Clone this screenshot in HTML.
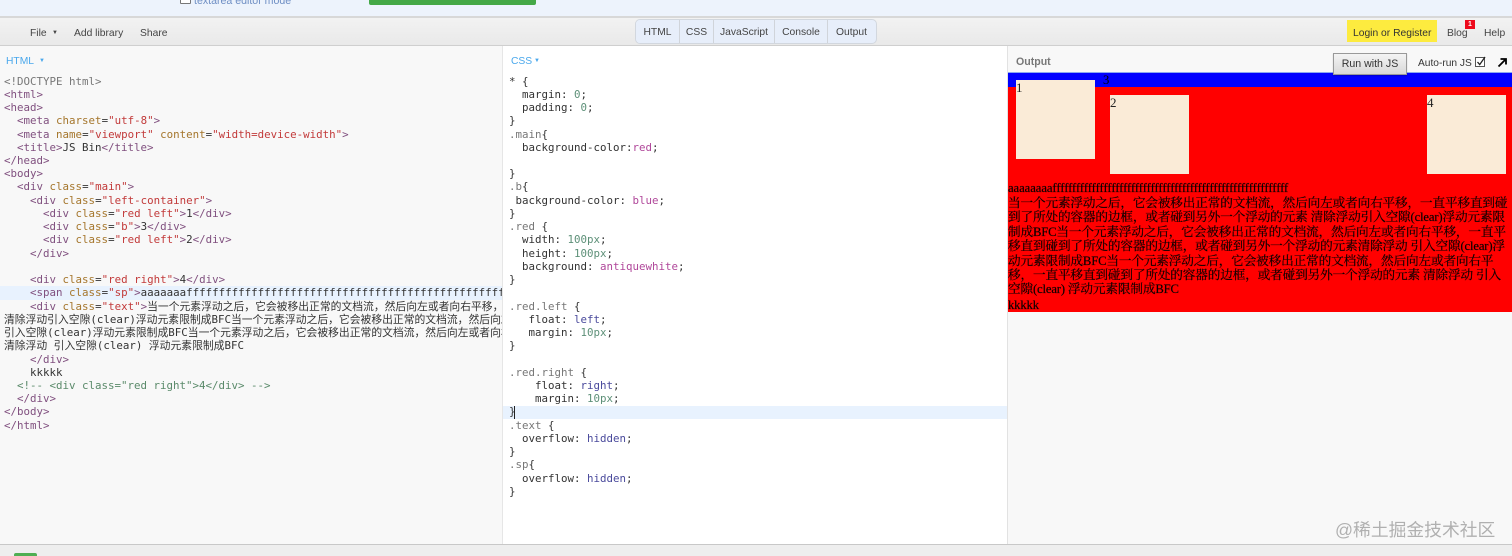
<!DOCTYPE html>
<html lang="zh"><head><meta charset="utf-8"><title>JS Bin</title>
<style>
*{margin:0;padding:0;box-sizing:border-box}
html,body{width:1512px;height:556px;overflow:hidden;background:#f8f8f8}
body{position:relative;font-family:"Liberation Sans","Noto Sans CJK SC",sans-serif;color:#333}
.a{position:absolute;white-space:nowrap}
.ui{font-size:10.3px;line-height:14px;color:#444}
pre{position:absolute;font-family:"DejaVu Sans Mono","Noto Sans CJK SC",monospace;font-size:10.8px;line-height:13.23px;color:#333;white-space:pre;overflow:hidden}
.t{color:#80507f}.n{color:#a5762c}.s{color:#c23a3a}.d{color:#777}.c{color:#5a8a6a}
.g{color:#777}.m{color:#5d9078}.k{color:#b0479a}.v{color:#4a4a9c}
.tab{position:absolute;top:20px;height:23px;background:#e7eefa;border-right:1px solid #d0d4da;font-size:10.3px;line-height:26px;text-align:center;color:#444}
.o{position:absolute;white-space:nowrap;font-family:"Liberation Serif","Noto Serif CJK SC",serif;font-size:12.64px;line-height:14.4px;color:#000;left:1008px;letter-spacing:-.14px;-webkit-text-stroke:.25px #300}
.box{position:absolute;width:79px;height:79px;background:#faebd7;font-family:"Liberation Serif",serif;font-size:13px;line-height:16px;color:#222}
</style></head>
<body>
<div class="a" style="left:0;top:0;width:1512px;height:16px;background:#edf3fc"></div>
<div class="a" style="left:180px;top:-8px;width:11px;height:12px;border:1px solid #777;background:#fff;border-radius:1px"></div>
<div class="a" style="left:194px;top:-5px;font-size:10.6px;line-height:13px;color:#6f8fc4">textarea editor mode</div>
<div class="a" style="left:369px;top:0;width:167px;height:5px;background:#44a847;border-radius:0 0 2px 2px"></div>
<div class="a" style="left:0;top:16px;width:1512px;height:2px;background:#d8d8d8"></div>
<div class="a" style="left:0;top:18px;width:1512px;height:27px;background:linear-gradient(#f2f2f2,#e9e9e9)"></div>
<div class="a" style="left:0;top:45px;width:1512px;height:1px;background:#cfcfcf"></div>

<div class="a ui" style="left:30px;top:26px;padding-top:1px">File</div>
<div class="a" style="left:52px;top:29px;font-size:6px;line-height:9px;color:#444">▼</div>
<div class="a ui" style="left:74px;top:27px">Add library</div>
<div class="a ui" style="left:140px;top:27px">Share</div>

<div class="a" style="left:635px;top:19px;width:242px;height:25px;border:1px solid #d2d7de;border-radius:5px;background:#e7eefa"></div>
<div class="tab" style="left:636px;width:44px;border-radius:4px 0 0 4px">HTML</div>
<div class="tab" style="left:680px;width:34px">CSS</div>
<div class="tab" style="left:714px;width:61px">JavaScript</div>
<div class="tab" style="left:775px;width:53px">Console</div>
<div class="tab" style="left:828px;width:47px;border-right:0;border-radius:0 4px 4px 0">Output</div>

<div class="a" style="left:1347px;top:20px;width:90px;height:22px;background:#fdeb3f"></div>
<div class="a ui" style="left:1353px;top:27px;color:#333">Login or Register</div>
<div class="a ui" style="left:1447px;top:27px">Blog</div>
<div class="a" style="left:1465px;top:20px;width:10px;height:9px;background:#ee0a1c;color:#fff;font-size:7px;line-height:9px;text-align:center;font-weight:bold">1</div>
<div class="a ui" style="left:1484px;top:27px">Help</div>

<!-- panels -->
<div class="a" style="left:0;top:46px;width:502px;height:498px;background:#f8f8f8"></div>
<div class="a" style="left:502px;top:46px;width:506px;height:498px;background:#fff;border-left:1px solid #e6e6e6;border-right:1px solid #e2e2e2"></div>
<div class="a" style="left:1008px;top:46px;width:504px;height:26px;background:#f8f8f8"></div>

<div class="a" style="left:6px;top:55px;font-size:10.3px;line-height:14px;color:#4aa8ec">HTML</div>
<div class="a" style="left:39px;top:57px;font-size:6px;line-height:9px;color:#4aa8ec">▼</div>
<div class="a" style="left:511px;top:55px;font-size:10.3px;line-height:14px;color:#4aa8ec">CSS</div>
<div class="a" style="left:534px;top:57px;font-size:6px;line-height:9px;color:#4aa8ec">▼</div>
<div class="a" style="left:1016px;top:55px;font-size:10.6px;line-height:14px;color:#777;font-weight:bold">Output</div>

<!-- HTML editor -->
<div class="a" style="left:0;top:286px;width:502px;height:14px;background:#e8f2fe"></div>
<pre style="left:4px;top:74.6px;width:498px;height:370px"><span class="d">&lt;!DOCTYPE html&gt;</span>
<span class="t">&lt;html&gt;</span>
<span class="t">&lt;head&gt;</span>
  <span class="t">&lt;meta</span> <span class="n">charset</span>=<span class="s">"utf-8"</span><span class="t">&gt;</span>
  <span class="t">&lt;meta</span> <span class="n">name</span>=<span class="s">"viewport"</span> <span class="n">content</span>=<span class="s">"width=device-width"</span><span class="t">&gt;</span>
  <span class="t">&lt;title&gt;</span>JS Bin<span class="t">&lt;/title&gt;</span>
<span class="t">&lt;/head&gt;</span>
<span class="t">&lt;body&gt;</span>
  <span class="t">&lt;div</span> <span class="n">class</span>=<span class="s">"main"</span><span class="t">&gt;</span>
    <span class="t">&lt;div</span> <span class="n">class</span>=<span class="s">"left-container"</span><span class="t">&gt;</span>
      <span class="t">&lt;div</span> <span class="n">class</span>=<span class="s">"red left"</span><span class="t">&gt;</span>1<span class="t">&lt;/div&gt;</span>
      <span class="t">&lt;div</span> <span class="n">class</span>=<span class="s">"b"</span><span class="t">&gt;</span>3<span class="t">&lt;/div&gt;</span>
      <span class="t">&lt;div</span> <span class="n">class</span>=<span class="s">"red left"</span><span class="t">&gt;</span>2<span class="t">&lt;/div&gt;</span>
    <span class="t">&lt;/div&gt;</span>

    <span class="t">&lt;div</span> <span class="n">class</span>=<span class="s">"red right"</span><span class="t">&gt;</span>4<span class="t">&lt;/div&gt;</span>
    <span class="t">&lt;span</span> <span class="n">class</span>=<span class="s">"sp"</span><span class="t">&gt;</span>aaaaaaafffffffffffffffffffffffffffffffffffffffffffffffffffffffffffff
    <span class="t">&lt;div</span> <span class="n">class</span>=<span class="s">"text"</span><span class="t">&gt;</span>当一个元素浮动之后，它会被移出正常的文档流，然后向左或者向右平移，一直平移
清除浮动引入空隙(clear)浮动元素限制成BFC当一个元素浮动之后，它会被移出正常的文档流，然后向左或者向右平移
引入空隙(clear)浮动元素限制成BFC当一个元素浮动之后，它会被移出正常的文档流，然后向左或者向右平移
清除浮动 引入空隙(clear) 浮动元素限制成BFC
    <span class="t">&lt;/div&gt;</span>
    kkkkk
  <span class="c">&lt;!-- &lt;div class="red right"&gt;4&lt;/div&gt; --&gt;</span>
  <span class="t">&lt;/div&gt;</span>
<span class="t">&lt;/body&gt;</span>
<span class="t">&lt;/html&gt;</span></pre>

<!-- CSS editor -->
<div class="a" style="left:503px;top:405.5px;width:504px;height:13.5px;background:#e8f2fe"></div>
<div class="a" style="left:514px;top:406px;width:1px;height:13px;background:#222"></div>
<pre style="left:509px;top:74.6px;width:495px;height:430px">* {
  margin: <span class="m">0</span>;
  padding: <span class="m">0</span>;
}
<span class="g">.main</span>{
  background-color:<span class="k">red</span>;

}
<span class="g">.b</span>{
 background-color: <span class="k">blue</span>;
}
<span class="g">.red</span> {
  width: <span class="m">100px</span>;
  height: <span class="m">100px</span>;
  background: <span class="k">antiquewhite</span>;
}

<span class="g">.red.left</span> {
   float: <span class="v">left</span>;
   margin: <span class="m">10px</span>;
}

<span class="g">.red.right</span> {
    float: <span class="v">right</span>;
    margin: <span class="m">10px</span>;
}
<span class="g">.text</span> {
  overflow: <span class="v">hidden</span>;
}
<span class="g">.sp</span>{
  overflow: <span class="v">hidden</span>;
}</pre>

<!-- Output -->
<div class="a" style="left:1008px;top:72px;width:504px;height:1px;background:#8aa8f0"></div>
<div class="a" style="left:1008px;top:73px;width:504px;height:239px;background:#f00"></div>
<div class="a" style="left:1008px;top:73px;width:504px;height:13.5px;background:#00f"></div>
<div class="a" style="left:1103px;top:72.5px;font-family:'Liberation Serif',serif;font-size:12.64px;line-height:14px;color:#000">3</div>
<div class="box" style="left:1016px;top:80px;">1</div>
<div class="box" style="left:1110px;top:94.5px">2</div>
<div class="box" style="left:1427px;top:94.5px">4</div>
<div class="o" style="top:181px;letter-spacing:-.05px">aaaaaaaaffffffffffffffffffffffffffffffffffffffffffffffffffffffffffff</div>
<div class="o" style="top:196px">当一个元素浮动之后，它会被移出正常的文档流，然后向左或者向右平移，一直平移直到碰</div>
<div class="o" style="top:210.4px">到了所处的容器的边框，或者碰到另外一个浮动的元素 清除浮动引入空隙(clear)浮动元素限</div>
<div class="o" style="top:224.8px">制成BFC当一个元素浮动之后，它会被移出正常的文档流，然后向左或者向右平移，一直平</div>
<div class="o" style="top:239.2px">移直到碰到了所处的容器的边框，或者碰到另外一个浮动的元素清除浮动 引入空隙(clear)浮</div>
<div class="o" style="top:253.6px">动元素限制成BFC当一个元素浮动之后，它会被移出正常的文档流，然后向左或者向右平</div>
<div class="o" style="top:268px">移，一直平移直到碰到了所处的容器的边框，或者碰到另外一个浮动的元素 清除浮动 引入</div>
<div class="o" style="top:282.4px">空隙(clear) 浮动元素限制成BFC</div>
<div class="o" style="top:298px">kkkkk</div>

<!-- Run controls -->
<div class="a" style="left:1333px;top:53px;width:74px;height:22px;background:linear-gradient(#f4f4f4,#d8d8d8);border:1px solid #999;box-shadow:0 1px 1px rgba(0,0,0,.2);font-size:10.6px;line-height:20px;text-align:center;color:#333">Run with JS</div>
<div class="a" style="left:1418px;top:57px;font-size:10.2px;line-height:14px;color:#333">Auto-run JS</div>
<div class="a" style="left:1475px;top:57px;width:10px;height:10px;border:1px solid #555;background:#fff"></div>
<svg class="a" style="left:1475px;top:55px" width="12" height="12" viewBox="0 0 12 12"><path d="M2.5 7l2.2 2.6L10 2" fill="none" stroke="#222" stroke-width="1.3"/></svg>
<svg class="a" style="left:1497px;top:57px" width="11" height="11" viewBox="0 0 11 11"><path d="M1.5 9.5L8 3M3.500 2h5.500v5.500" fill="none" stroke="#000" stroke-width="1.8"/></svg>

<!-- Footer -->
<div class="a" style="left:0;top:544px;width:1512px;height:1px;background:#c8c8c8"></div>
<div class="a" style="left:0;top:545px;width:1512px;height:11px;background:#eeeeee"></div>
<div class="a" style="left:14px;top:553px;width:23px;height:3px;background:#4fae53;border-radius:2px 2px 0 0"></div>

<div class="a" style="left:1335px;top:519px;font-size:17.8px;line-height:22px;color:#b0b0b0">@稀土掘金技术社区</div>
</body></html>
